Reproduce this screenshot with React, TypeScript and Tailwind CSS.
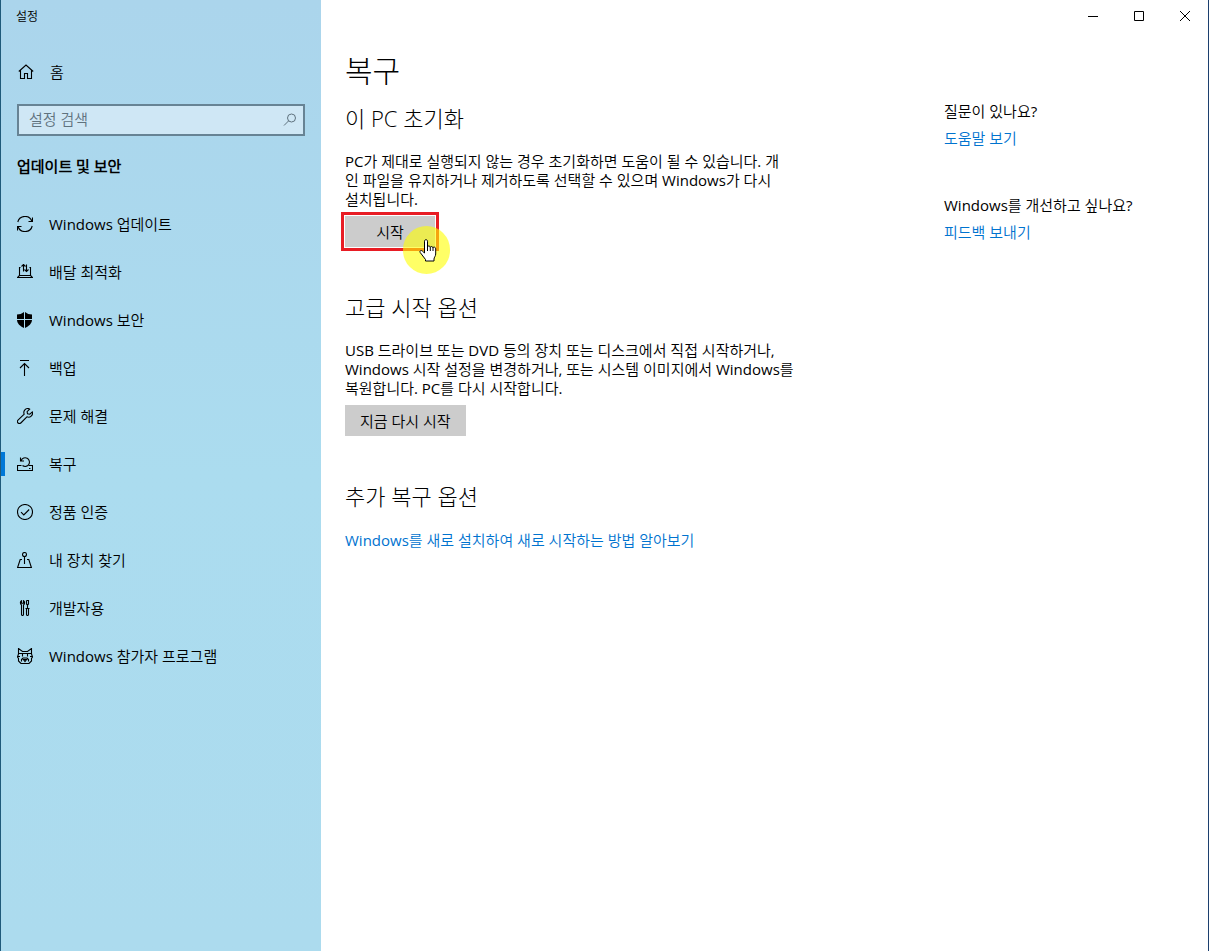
import type { ReactNode } from 'react';

interface NavItem {
  label: string;
  icon: ReactNode;
  active?: boolean;
}

function Icon({ children }: { children: ReactNode }) {
  return (
    <svg
      className="w-4 h-4 shrink-0"
      viewBox="0 0 16 16"
      fill="none"
      stroke="currentColor"
      strokeWidth="1.1"
      aria-hidden="true"
    >
      {children}
    </svg>
  );
}

const navItems: NavItem[] = [
  {
    label: 'Windows 업데이트',
    icon: (
      <Icon>
        <path d="M.8 6A7.4 7.4 0 0 1 15 5.5M15.2 10A7.4 7.4 0 0 1 1 10.5" />
        <path d="M15.5 1.5v4h-4M.5 14.5v-4h4" />
      </Icon>
    ),
  },
  {
    label: '배달 최적화',
    icon: (
      <Icon>
        <path d="M3.5 3.5h-1v8l-2 2h15l-2-2v-8h-1M2.5 11.5h11M6.5 7.5V.5M9.5 .5v7" />
        <path d="M4.5 2.5l2-2 2 2M7.5 5.5l2 2 2-2" />
      </Icon>
    ),
  },
  {
    label: 'Windows 보안',
    icon: (
      <Icon>
        <path
          d="M7 0v7H0V2.5C2.6 2.5 5 1.7 7 0zM8 0c2 1.7 4.4 2.5 7 2.5V7H8zM0 8h7v8C3 14.2 .2 11.5 0 8zM8 8h7c-.2 3.5-3 6.2-7 8z"
          fill="currentColor"
          stroke="none"
        />
      </Icon>
    ),
  },
  {
    label: '백업',
    icon: (
      <Icon>
        <path d="M3 .5h9M7.5 16V3.5M3 8l4.5-4.5L12 8" />
      </Icon>
    ),
  },
  {
    label: '문제 해결',
    icon: (
      <Icon>
        <path d="M11.5 .6a4 4 0 0 0-4.3 5.6L1 12.2a1.9 1.9 0 0 0 2.8 2.8L9.9 8.8a4 4 0 0 0 5.4-4.9l-2.5 2.3-2.3-.4-.4-2.2 2.6-2.5a4 4 0 0 0-1.2-.5z" />
      </Icon>
    ),
  },
  {
    label: '복구',
    active: true,
    icon: (
      <Icon>
        <path d="M4.5 9.5h-4v5h15v-5h-4M12 12.5h1.5" />
        <path d="M4.2 4.5A4.3 4.3 0 1 1 5.5 9.5M3.5 1.5V5H7" />
      </Icon>
    ),
  },
  {
    label: '정품 인증',
    icon: (
      <Icon>
        <circle cx="8" cy="8" r="7.5" />
        <path d="M4 8.2L6.8 11 12.2 5.5" />
      </Icon>
    ),
  },
  {
    label: '내 장치 찾기',
    icon: (
      <Icon>
        <circle cx="7.5" cy="2.5" r="2" />
        <path d="M7.5 4.5V12M5 7.5H3.2L.6 15.5h13.8L11.8 7.5H10" />
      </Icon>
    ),
  },
  {
    label: '개발자용',
    icon: (
      <Icon>
        <path d="M4.5 .7C3 1.5 3 4 4.5 5v9.500c0 1.300 2 1.300 2 0V5c1.500-1 1.500-3.300 0-4.300v2.600h-2z" />
        <path d="M9.5 .5h2V4l-1 1v3.5M9.5 .5V4l1 1M8.5 8.5h4M9.5 8.5v6c0 1.300 2 1.300 2 0v-6" />
      </Icon>
    ),
  },
  {
    label: 'Windows 참가자 프로그램',
    icon: (
      <Icon>
        <path d="M1.5 6V.5l4 3h5l4-3V6l1 3-1 1.500V13L12 15.500H4L1.5 13v-2.500L.5 9z" />
        <path d="M1.5 5.5h13M5.5 5.5v3M10.5 5.5v3M.5 8.500H3M13 8.500h2.500M4.5 13.500v-2L6 10h4l1.500 1.500v2M6.500 11.500h3L8 13.500z" />
      </Icon>
    ),
  },
];

function Sidebar() {
  return (
    <aside className="w-80 shrink-0 bg-linear-to-b from-[#abd5ec] via-[#abdcef] to-[#acdbee]">
      <div className="h-8 flex items-center pl-[15px] pt-px text-xs">설정</div>
      <a href="#home" className="mt-4 h-12 flex items-center gap-4 pl-[17px]">
        <Icon>
          <path d="M.8 7.5L8 1l7.2 6.5M2.5 6.5v8h4v-5h3v5h4v-8" />
        </Icon>
        홈
      </a>
      <form className="mt-2 mx-4 h-8 flex items-center border-2 border-[#678394] bg-[#cfe7f5]">
        <input
          type="search"
          aria-label="설정 검색"
          placeholder="설정 검색"
          className="flex-1 min-w-0 h-full pl-2.5 pb-0.5 bg-transparent outline-none placeholder:text-[#5f727e]"
        />
        <button type="submit" aria-label="검색" className="px-1.5 text-[#5f727e]">
          <svg className="w-3.5 h-3.5" viewBox="0 0 14 14" fill="none" stroke="currentColor">
            <circle cx="8.5" cy="5" r="4" />
            <path d="M5.7 7.8L1 12.5" />
          </svg>
        </button>
      </form>
      <h2 className="mt-[18px] pl-4 leading-6 font-bold">업데이트 및 보안</h2>
      <nav className="mt-[22px]">
        {navItems.map((item) => (
          <a
            key={item.label}
            href="#"
            aria-current={item.active ? 'page' : undefined}
            className="h-12 flex items-center"
          >
            <span className={item.active ? 'w-1 h-6 bg-[#0078d7]' : 'w-1 h-6'} />
            <span className="ml-3 mr-4">{item.icon}</span>
            {item.label}
          </a>
        ))}
      </nav>
    </aside>
  );
}

function WindowControls() {
  return (
    <div className="h-8 flex justify-end">
      <button aria-label="최소화" className="w-[46px] flex items-center justify-center">
        <svg className="w-2.5 h-2.5" viewBox="0 0 10 10" stroke="currentColor">
          <path d="M0 5.5h10" />
        </svg>
      </button>
      <button aria-label="최대화" className="w-[46px] flex items-center justify-center">
        <svg className="w-2.5 h-2.5" viewBox="0 0 10 10" fill="none" stroke="currentColor">
          <path d="M.5 .5h9v9h-9z" />
        </svg>
      </button>
      <button aria-label="닫기" className="w-[46px] flex items-center justify-center">
        <svg className="w-2.5 h-2.5" viewBox="0 0 10 10" stroke="currentColor">
          <path d="M0 0l10 10M10 0L0 10" />
        </svg>
      </button>
    </div>
  );
}

function SectionTitle({ children }: { children: ReactNode }) {
  return (
    <h2 className="text-[22px] leading-7 font-light font-['Open_Sans','Noto_Sans_CJK_KR_Light','Noto_Sans_CJK_KR',sans-serif]">
      {children}
    </h2>
  );
}

function Pointer() {
  return (
    <div className="absolute left-[58px] top-[10px] w-[47px] h-[48px] rounded-full bg-[#ffff00]/60 pointer-events-none">
      <svg className="absolute left-[16px] top-[13px] w-[18px] h-[23px]" viewBox="0 0 18 23" aria-hidden="true">
        <path
          d="M5.5 14V2.2C5.5 .2 8.5 .2 8.5 2.2V8c0-1.5 2.8-1.3 2.8 .5 0-1.5 2.7-1.2 2.7 .5 0-1.4 2.7-1.2 2.7 .8V15c0 2-1.7 3.5-1.7 5v2H6.5v-1.5L1.2 13.5c-1-1.6 1-2.6 2.1-1.5z"
          fill="white"
          stroke="black"
        />
        <path d="M8.5 8v4M11.3 8.5V12M14 9v3" stroke="black" />
      </svg>
    </div>
  );
}

export default function App() {
  return (
    <div className="min-h-screen flex bg-white text-black text-[15px] leading-[19px] border-x border-l-[#1f5a7a] border-r-[#1c3f6e] font-['Open_Sans','Noto_Sans_CJK_KR_DemiLight','Noto_Sans_CJK_KR',sans-serif]">
      <Sidebar />
      <main className="flex-1 min-w-0">
        <WindowControls />
        <div className="pl-6 pr-4 pt-4">
          <h1 className="text-[30px] leading-[46px] font-light font-['Open_Sans','Noto_Sans_CJK_KR_Light','Noto_Sans_CJK_KR',sans-serif]">
            복구
          </h1>
          <div className="flex">
            <div className="flex-1 max-w-[599px] pt-2.5">
              <section className="max-w-[480px]">
                <SectionTitle>이 PC 초기화</SectionTitle>
                <p className="mt-5">
                  PC가 제대로 실행되지 않는 경우 초기화하면 도움이 될 수 있습니다. 개
                  <br />
                  인 파일을 유지하거나 제거하도록 선택할 수 있으며 Windows가 다시
                  <br />
                  설치됩니다.
                </p>
                <div className="relative mt-[7px] w-[90px]">
                  <button className="block w-full h-[31px] pt-0.5 bg-[#cccccc]">시작</button>
                  <div className="absolute -inset-1 border-3 border-[#e81c24] shadow-[inset_0_0_0_1px_#ffffff] pointer-events-none" />
                  <Pointer />
                </div>
              </section>
              <section className="mt-[46px] max-w-[480px]">
                <SectionTitle>고급 시작 옵션</SectionTitle>
                <p className="mt-5">
                  USB 드라이브 또는 DVD 등의 장치 또는 디스크에서 직접 시작하거나,
                  <br />
                  Windows 시작 설정을 변경하거나, 또는 시스템 이미지에서 Windows를
                  <br />
                  복원합니다. PC를 다시 시작합니다.
                </p>
                <button className="mt-[7px] block h-[31px] px-[15px] pt-0.5 bg-[#cccccc]">지금 다시 시작</button>
              </section>
              <section className="mt-[46px]">
                <SectionTitle>추가 복구 옵션</SectionTitle>
                <a href="#" className="mt-[21px] block text-[#0073cf]">
                  Windows를 새로 설치하여 새로 시작하는 방법 알아보기
                </a>
              </section>
            </div>
            <aside className="pt-2">
              <h3>질문이 있나요?</h3>
              <a href="#" className="mt-2 block text-[#0073cf]">
                도움말 보기
              </a>
              <h3 className="mt-12">Windows를 개선하고 싶나요?</h3>
              <a href="#" className="mt-2 block text-[#0073cf]">
                피드백 보내기
              </a>
            </aside>
          </div>
        </div>
      </main>
    </div>
  );
}
